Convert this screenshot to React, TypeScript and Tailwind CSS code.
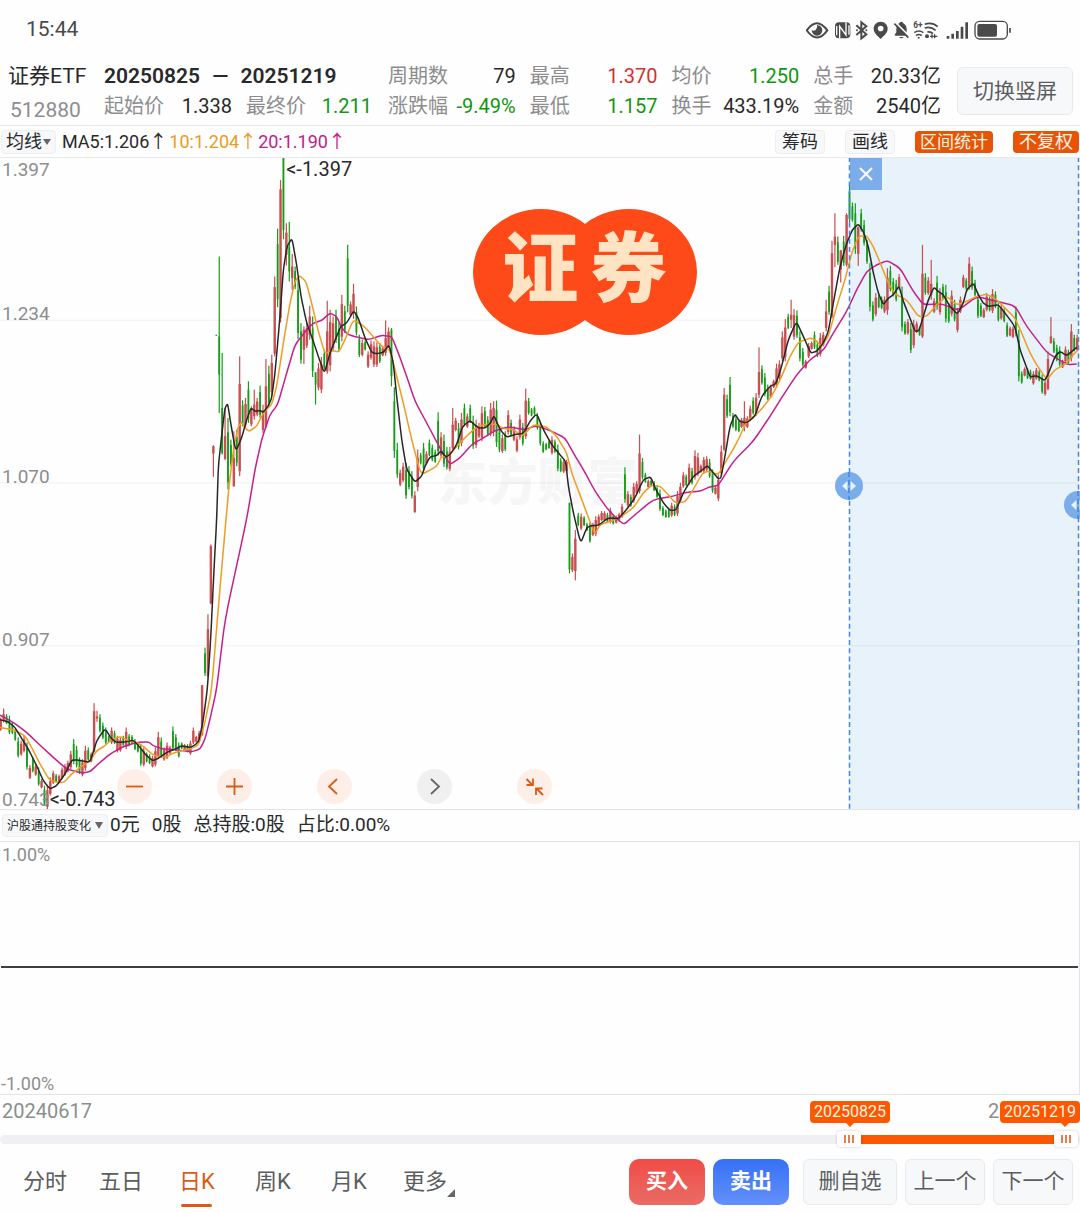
import React, { useState } from "react";

const RED = "#c94f50";
const GREEN = "#179c1a";
const STEP = 2.919;

// Each bar: colour letter, high, low and, where it differs, body top and body bottom.
// Values are thirds of a chart unit below the section's base.
const SECTIONS: { x: number; base: number; bars: string }[] = [
  {
    x: 0.7,
    base: 690,
    bars:
      "r85,125 r58,100,75,95 g75,105 g80,135 g100,135 g120,155 g145,205 r155,200 r140,190 g160,242 r228,270 g205,250 r225,260 g235,290 r270,298 g290,350 r290,360 r265,320 r245,285 g255,280 " +
      "r257,280 r235,270 r225,260 r215,250 r185,240 g150,225 g170,235 g205,255 r210,262 r170,245 g175,215 r190,220 r42,190,66,188 r65,98,82,88 g75,130 g100,150 g115,165 g140,160 r115,165 g125,165 " +
      "r140,190 r145,188 g140,170 r115,180 g135,172 g138,165 g150,183 g160,190 g165,230 r175,232 g190,220 g195,225 r200,235 r175,232 r128,210 g145,205 r175,215 r160,210 r170,195 g112,185 " +
      "g135,185 g160,205 g160,180 r165,185 g165,190 r155,197 r115,165 r140,160 r125,160 r-12,140,-12,138 g-125,-40 r-225,-35,-180,-40 r-435,-255,-430,-258",
  },
  {
    x: 213.4,
    base: 150,
    bars:
      "r887,982,890,912 g555,558 g320,790,560,675 g610,915,775,910 r775,932,860,928 g805,1020 g870,950 r845,1012,925,1010 g840,950 r620,980,703,965 g752,830 r745,835 g695,820 r770,830 r720,810,765,800 r745,800 g708,805 r765,850 r628,835,710,830 g648,770 " +
      "r615,740 r380,620,412,612 g236,472 r90,518,118,505 g22,268,22,240 r220,347,248,315 g216,395,290,365 r312,420,350,385 g350,418 g385,568 g520,642 r530,643,540,600 r520,595 r468,570,500,555 g500,682 g668,765,668,705 r640,722 r622,730 g600,660 r453,672,545,665 " +
      "r480,665 r500,605 g480,580 g520,605 r435,575 g468,550 g285,488 r455,500 r402,507,432,490 g470,557 g555,622 r570,620 g572,602 r605,655 r572,630 r575,652 r578,652 g580,640 r590,620 r512,618,565,610 r533,595 g535,710,540,680 g713,925 g880,985 r960,1010 " +
      "r940,998 g940,1048 g950,1020 g965,1047 r1025,1090,1038,1088 r900,1025 g910,945 g880,965 r905,945 g870,920",
  },
  {
    x: 432.3,
    base: 370,
    bars:
      "g225,275 g240,280 g128,258 r188,265 g195,292 g232,300 r232,305 r115,240,165,235 r145,185 g160,240 r130,230 g102,170 r132,175 g105,160 g138,238 r150,235 r160,205 r110,215 g112,175 g140,200 " +
      "r100,200 r95,200,115,185 g93,232 g170,248 r195,250 g185,245 r122,195 g150,200 r170,215 r200,248 r135,210 g160,228 r57,208,93,200 g85,135 g115,140 g110,135 g130,180 g160,228 g215,250 g220,242 " +
      "g210,238 r200,255 g210,250 g225,305 g265,308 r270,310 r270,308 g400,612,400,600 r552,608 r482,633,508,605 g430,470 r432,482 g440,470 g460,485 g460,520 r460,500 r440,500 r435,470 r425,455 r425,455 " +
      "g430,460 r415,462 g435,465 r438,462 r430,455 r403,445 g293,400 r365,412 g375,412 r340,400 r335,375 r195,372,252,365 g265,330 g310,340 r330,355 g330,350 g335,365 g350,385 g360,425 g410,440 " +
      "g420,445 g415,445 r400,442 g405,440 r365,440 r340,400 r308,355 g315,350 r282,345 g295,345 r242,330 r250,320 r285,310 r262,310 r260,305 g268,325 g300,370 r350,375 r315,395 r228,320 " +
      "r55,245,75,240 g75,145 g22,140 g130,175 g140,185 g150,188",
  },
  {
    x: 741.5,
    base: 180,
    bars:
      "r715,745 r665,755,715,740 r710,745 r678,725 g653,705 r640,710 r503,655,577,645 g557,615 g580,650 g615,662 r615,655 r600,625 r552,625 r542,600 r455,545 r418,545 g402,448 r360,445,405,420 r388,480 g392,475 " +
      "g455,545 g505,560 r540,567 r490,535 r485,510 g455,508 g485,532 r460,530 r457,500 r360,455,395,445 g318,405 r183,415,220,410 r100,262,170,195 g170,255 r210,308,212,270 g168,258 r100,260,105,255 g12,128 g68,125 g70,222 " +
      "r140,258,142,222 g87,155 g120,197 g180,252 g250,395 g365,425 r340,410 g345,385 g350,388 r350,400 r265,405 g258,335 g295,350 g300,365 r283,330 g320,455 g425,465 r418,465 g430,520 r420,505 " +
      "r425,460 g440,468 r195,475,282,470 g280,345 r292,345 r240,360,312,345 r355,400 g288,390 r325,405 g312,360 g315,428 g370,430 r332,410 g360,425 r385,458 r350,400 r285,325 g295,330 r232,330 g260,330 " +
      "g300,350 g345,415 g370,412 r385,415 r340,395 g350,395 r328,400 g335,385 g370,425 r375,420 g385,428 g428,472 r440,470 r440,475 g380,470 g450,605 g575,612 r563,590 g565,598 g570,600 " +
      "r575,615 r565,600 g570,605 g585,642 r600,648 r515,632,538,628 r412,492,470,490 g475,520 g495,545 g500,560 r540,565 r500,550 g510,552 r433,545 g465,515 r465,515",
  },
];

type Run = [number, number, string];

const AVERAGES: { color: string; runs: Run[] }[] = [
  {
    color: "#c41f8c",
    runs: [
      [0, 690, "0,78 40,100 80,130 120,168 160,205 200,240 245,252 270,248 300,220 330,195 370,172 410,160 445,158 460,170 490,180 530,183 575,188 600,180 615,150 630,90 650,0 675,-210"],
      [190, 150, "170,1110 195,960 215,870 240,795 263,765 290,670 315,585 350,540 370,520 395,512 420,490 440,500 455,535 475,555 500,562 535,570 575,557 605,560 625,610 650,680"],
      [400, 370, "45,95 80,160 125,245 150,285 180,265 215,225 250,205 285,183 325,172 375,180 410,168 455,185 495,205 520,250 550,300 585,365 620,415 650,448 672,465 700,440 760,390 820,380 860,368"],
      [700, 180, "0,935 30,922 55,918 100,845 160,785 210,710 240,662 290,585 330,540 370,512 400,460 440,395 470,330 500,275 530,255 562,242 600,265 640,335 670,375 725,372 775,392 830,350 880,362 945,378 980,440 1040,518 1080,542 1105,555 1130,553"],
    ],
  },
  {
    color: "#ef9c22",
    runs: [
      [0, 690, "0,115 40,122 75,140 95,175 120,225 150,275 190,282 215,255 240,235 270,215 290,185 315,170 330,155 360,142 385,155 410,160 430,172 450,190 465,200 495,205 520,192 545,185 575,178 595,168 615,100 635,0 657,-270"],
      [190, 150, "108,1110 118,1000 132,890 145,830 155,818 165,835 177,845 200,830 215,800 228,780 245,765 260,710 280,580 300,460 315,395 328,377 348,395 365,460 385,545 405,612 425,602 447,607 465,570 490,510 520,528 545,555 575,590 598,600 610,640 640,760 665,870 690,965 700,972"],
      [400, 370, "88,303 110,290 125,262 145,260 175,225 210,190 235,168 270,163 290,165 315,178 335,178 368,200 400,165 440,172 470,200 500,250 515,310 545,390 575,470 585,495 600,465 640,453 665,440 700,415 730,370 755,347 780,350 800,370 825,400 855,398 880,360 905,315 920,305 955,315 975,280 1000,238"],
      [700, 180, "115,780 140,725 175,700 215,650 245,590 270,530 295,488 330,475 345,480 365,500 385,470 410,380 435,300 455,220 475,170 500,167 520,200 545,260 565,310 585,343 620,360 655,410 680,410 710,375 740,350 770,375 800,365 830,350 860,343 890,360 915,385 945,415 965,460 990,520 1010,555 1040,600 1065,570 1095,555 1115,530 1130,515"],
    ],
  },
  {
    color: "#272727",
    runs: [
      [0, 690, "0,92 25,98 45,115 60,140 85,180 110,230 130,275 150,300 170,290 195,255 215,213 235,213 270,220 290,155 315,118 335,150 350,160 380,158 400,153 420,175 440,200 458,215 475,208 500,190 530,178 545,170 570,175 585,168 597,155 610,90 622,0 632,-150 642,-360"],
      [190, 150, "80,1110 85,950 97,840 105,775 113,762 122,820 137,905 155,865 170,810 183,775 195,785 210,783 220,788 235,768 245,745 255,670 270,500 280,360 291,290 306,265 320,345 333,440 350,520 370,575 385,620 403,672 420,610 440,560 452,530 470,520 491,483 505,505 525,565 545,608 560,612 580,608 597,585 610,640 620,740 635,870 650,960 675,998 695,980"],
      [400, 370, "75,290 90,262 110,258 122,245 138,262 150,255 170,225 188,170 210,153 235,175 255,175 270,162 282,138 300,180 320,203 345,195 370,192 390,155 410,132 430,180 455,225 475,250 497,275 505,350 520,430 542,522 560,475 575,468 595,468 625,445 655,448 680,420 705,385 730,330 752,322 765,355 790,400 810,423 828,422 850,370 880,320 905,303 922,288 940,310 955,328 963,325 975,260 990,170 1005,133"],
      [700, 180, "118,725 140,730 165,710 185,650 210,620 228,612 245,560 265,480 289,425 310,470 332,520 350,515 370,490 385,455 400,370 420,260 440,190 457,150 475,132 490,155 505,200 520,280 535,340 550,375 565,355 580,345 597,318 610,365 630,415 645,455 657,453 670,410 685,360 702,322 715,335 730,345 750,380 772,403 790,370 800,330 820,310 835,345 850,370 865,380 895,375 915,400 945,440 960,510 975,550 990,592 1010,588 1035,603 1050,570 1065,530 1080,515 1100,528 1130,503"],
    ],
  },
];

function averagePath(runs: Run[]) {
  const pts = runs.flatMap(([ox, oy, text]) =>
    text.split(" ").map((p) => {
      const [x, y] = p.split(",").map(Number);
      return [ox + x / 3, oy + y / 3];
    })
  );
  let d = `M${pts[0][0]} ${pts[0][1]}`;
  for (let i = 1; i < pts.length - 1; i++) {
    const [x, y] = pts[i];
    const [px, py] = pts[i - 1];
    const [nx, ny] = pts[i + 1];
    d += `L${x + (px - x) * 0.25} ${y + (py - y) * 0.25}Q${x} ${y} ${x + (nx - x) * 0.25} ${y + (ny - y) * 0.25}`;
  }
  const last = pts[pts.length - 1];
  return d + `L${last[0]} ${last[1]}`;
}

function Candles() {
  return (
    <g>
      {SECTIONS.map((s) =>
        s.bars.split(" ").map((bar, i) => {
          const v = bar.slice(1).split(",").map(Number);
          const inset = (v[1] - v[0]) * 0.2;
          const [hi, lo, top = v[0] + inset, bottom = v[1] - inset / 2] = v;
          const x = s.x + i * STEP;
          const y = (n: number) => s.base + n / 3;
          const red = bar[0] === "r";
          const fill = red ? RED : GREEN;
          return (
            <g key={`${s.x}-${i}`} fill={fill}>
              <rect x={x - 0.6} y={y(hi)} width={1.2} height={(lo - hi) / 3} />
              <rect x={x - (red ? 1.2 : 0.9)} y={y(top)} width={red ? 2.4 : 1.8} height={(bottom - top) / 3} />
            </g>
          );
        })
      )}
    </g>
  );
}

function StatusIcons() {
  return (
    <svg viewBox="78 55 621 66" className="h-[22px] w-[207px]" fill="none" stroke="#4a4a4a" aria-label="状态图标">
      <path d="M80 89Q111 46 142 89Q111 132 80 89Z" strokeWidth="6" />
      <path d="M111 73a16 16 0 1 1-16 16q10 4 14-4t2-12Z" fill="#4a4a4a" stroke="none" />
      <rect x="165" y="65" width="46" height="48" rx="12" fill="#4a4a4a" stroke="none" />
      <path d="M179 113V77l19 26V65M170 104V76M207 102V74" stroke="#fff" strokeWidth="4" />
      <path d="M229 74l30 27-15 12V65l15 12-30 26" strokeWidth="6" />
      <circle cx="231" cy="89" r="3" fill="#4a4a4a" stroke="none" />
      <circle cx="259" cy="89" r="3" fill="#4a4a4a" stroke="none" />
      <path d="M302 63c-12 0-21 9-21 21 0 14 14 23 21 31 7-8 21-17 21-31 0-12-9-21-21-21Zm0 12a8 8 0 1 1 0 17 8 8 0 0 1 0-17Z" fill="#4a4a4a" fillRule="evenodd" stroke="none" />
      <path d="M354 70q5-2 6-5 4-4 8 0 1 3 5 5 7 5 7 14v12l5 9h-37l-5-1 6-9V84q0-9 5-14ZM357 109h14q-7 8-14 0Z" fill="#4a4a4a" stroke="none" />
      <path d="M347 66l42 42" stroke="#fff" strokeWidth="5" />
      <path d="M343 69l42 42" strokeWidth="5" />
      <text x="400" y="82" fontSize="25" fontWeight="700" fill="#4a4a4a" stroke="none" fontFamily="Roboto">6+</text>
      <path d="M434 71q22-8 39 7M434 82q18-6 33 7M442 94q10-2 17 5M403 96q13-10 27 0M408 105q9-7 17 0" strokeWidth="5" />
      <circle cx="416" cy="111" r="3" fill="#4a4a4a" stroke="none" />
      <circle cx="441" cy="107" r="6" fill="#4a4a4a" stroke="none" />
      <path d="M456 101v12M464 101v12M450 107h22" strokeWidth="4" />
      <path d="M504 106v8M518 99v15M532 91v23M546 78v36M560 65v49" strokeWidth="8" />
      <rect x="585" y="62" width="97" height="53" rx="14" strokeWidth="4" />
      <rect x="592" y="70" width="59" height="38" rx="6" fill="#4a4a4a" stroke="none" />
      <path d="M690 82v14" strokeWidth="5" />
    </svg>
  );
}

type Stat = { label: string; value: string; tone: string };

function StatRow({ label, value, tone }: Stat) {
  return (
    <div className="flex justify-between">
      <span className="text-[#8d8d8f]">{label}</span>
      <span className={tone}>{value}</span>
    </div>
  );
}

const DARK = "text-[#29292b]";
const UP = "text-[#d3302f]";
const DOWN = "text-[#0f980f]";

const STATS: Stat[][] = [
  [
    { label: "周期数", value: "79", tone: DARK },
    { label: "涨跌幅", value: "-9.49%", tone: DOWN },
  ],
  [
    { label: "最高", value: "1.370", tone: UP },
    { label: "最低", value: "1.157", tone: DOWN },
  ],
  [
    { label: "均价", value: "1.250", tone: DOWN },
    { label: "换手", value: "433.19%", tone: DARK },
  ],
  [
    { label: "总手", value: "20.33亿", tone: DARK },
    { label: "金额", value: "2540亿", tone: DARK },
  ],
];

function Header() {
  return (
    <header className="flex border-b border-[#e9e9ec] pt-px pr-[7px] pl-2 text-xl leading-[30px]">
      <div className="w-24 shrink-0">
        <h1 className={`text-[21px] whitespace-nowrap ${DARK}`}>证券ETF</h1>
        <p className="pt-1 pl-[2px] text-[21px] text-[#8d8d8f]">512880</p>
      </div>
      <div className="mr-4 w-[268px] shrink-0">
        <p className={`text-[21px] font-semibold whitespace-nowrap ${DARK}`}>
          20250825 <span className="px-[7px]">—</span> 20251219
        </p>
        <div className="flex gap-[14px]">
          <div className="w-32">
            <StatRow label="起始价" value="1.338" tone={DARK} />
          </div>
          <div className="w-[126px]">
            <StatRow label="最终价" value="1.211" tone={DOWN} />
          </div>
        </div>
      </div>
      <div className="grid min-w-0 flex-1 grid-cols-4 gap-x-[14px] whitespace-nowrap">
        {STATS.map((col) => (
          <div key={col[0].label}>
            {col.map((s) => (
              <StatRow key={s.label} {...s} />
            ))}
          </div>
        ))}
      </div>
      <button className="mt-[6px] ml-4 h-12 w-[116px] shrink-0 rounded-md border border-[#e8ebee] bg-[#f7f8fa] text-[21px] text-[#5c5d60]">
        切换竖屏
      </button>
    </header>
  );
}

function AverageBar() {
  return (
    <div className="flex h-8 items-center border-b border-[#e9e9ec] pr-px pl-px text-lg leading-6">
      <button className={`mr-[6px] flex items-center gap-px rounded border border-[#eceef0] bg-[#f7f8fa] px-1 leading-[22px] ${DARK}`}>
        均线
        <svg viewBox="0 0 8 6" className="h-[6px] w-2" fill="#666">
          <path d="M0 0h8L4 6Z" />
        </svg>
      </button>
      <span className={DARK}>MA5:1.206↑</span>
      <span className="ml-[2px] text-[#ec9a20]">10:1.204↑</span>
      <span className="ml-px text-[#c0208a]">20:1.190↑</span>
      <div className="ml-auto flex items-center gap-5 leading-[22px]">
        <button className={`rounded border border-[#eceef0] bg-[#f7f8fa] px-[6px] ${DARK}`}>筹码</button>
        <button className={`rounded border border-[#eceef0] bg-[#f7f8fa] px-[6px] ${DARK}`}>画线</button>
        <button className="rounded bg-[#e65507] px-[5px] text-[17px] text-[#fff3e6]">区间统计</button>
        <button className="rounded bg-[#e65507] px-[6px] text-[#fff3e6]">不复权</button>
      </div>
    </div>
  );
}

const PRICES = [
  { text: "1.397", place: "top-[3px]" },
  { text: "1.234", place: "top-[147px]" },
  { text: "1.070", place: "top-[310px]" },
  { text: "0.907", place: "top-[473px]" },
  { text: "0.743", place: "top-[633px]" },
];

const TOOLS = [
  { name: "缩小", d: "M9 17.5h17", tone: "bg-[#fdeee7] text-[#dc5b14]" },
  { name: "放大", d: "M9 17.5h17M17.5 9v17", tone: "bg-[#fdeee7] text-[#dc5b14]" },
  { name: "向左", d: "M20 10l-8 7.500 8 7.500", tone: "bg-[#fdeee7] text-[#dc5b14]" },
  { name: "向右", d: "M14 10l8 7.500-8 7.500", tone: "bg-[#f0f0f1] text-[#666]" },
  { name: "收起", d: "M9.500 10l6 6M16 9.500v6.500H9.500M26 26l-6-6M19 26v-6.500h6.500", tone: "bg-[#fdeee7] text-[#dc5b14]" },
];

function HandleButton({ label, place }: { label: string; place: string }) {
  return (
    <button aria-label={label} className={`absolute h-7 w-7 -translate-x-1/2 rounded-full bg-[#7badeb] ${place}`}>
      <svg viewBox="0 0 28 28" className="h-7 w-7" fill="#e9f3fd">
        <path d="M12.500 9v10L7 14ZM15.500 9v10l5.500-5Z" />
        <path d="M14 0v28" stroke="#4786d6" strokeWidth="1.500" strokeDasharray="5 3" />
      </svg>
    </button>
  );
}

function MainChart() {
  return (
    <section className="relative h-[652px] overflow-hidden border-b border-[#e4e4e6]">
      <p className="absolute top-[293px] left-[40.5%] text-[50px] leading-[64px] font-black text-[#f6f6f6]">东方财富</p>
      <svg viewBox="0 158 1080 652" preserveAspectRatio="none" className="absolute inset-0 h-full w-full">
        <rect x="849.500" y="157" width="229" height="653" fill="#e7f2fb" />
        <path d="M0 320.500H1080M0 483.500H1080M0 646.500H1080" stroke="#000" strokeOpacity="0.060" />
        <Candles />
        {AVERAGES.map((a) => (
          <path key={a.color} d={averagePath(a.runs)} fill="none" stroke={a.color} strokeWidth="1.500" strokeLinejoin="round" />
        ))}
        <path d="M849.500 157V810M1078.500 157V810" stroke="#4786d6" strokeWidth="1.500" strokeDasharray="5 3.200" />
      </svg>

      {PRICES.map((p) => (
        <span key={p.text} className={`absolute left-[2px] text-[19px] leading-[18px] text-[#8d8d8f] ${p.place}`}>
          {p.text}
        </span>
      ))}
      <span className={`absolute top-[1px] left-[26.5%] text-xl leading-5 ${DARK}`}>&lt;-1.397</span>
      <span className={`absolute top-[631px] left-[4.600%] text-xl leading-5 ${DARK}`}>&lt;-0.743</span>

      <div className="absolute top-[51px] left-[43.750%] h-[126px] w-[224px]">
        <svg viewBox="0 0 224 126" className="absolute inset-0 h-full w-full" fill="#fe4a18">
          <ellipse cx="68" cy="63" rx="68" ry="63" />
          <ellipse cx="156" cy="63" rx="68" ry="63" />
        </svg>
        <p className="relative flex justify-center gap-3 text-[76px] leading-[122px] font-black text-[#ffe4c4]">
          <span>证</span>
          <span>券</span>
        </p>
      </div>

      <button aria-label="关闭区间统计" className="absolute top-0 left-[78.700%] h-8 w-8 bg-[#7badeb]">
        <svg viewBox="0 0 32 32" className="h-8 w-8" stroke="#fff" strokeWidth="2">
          <path d="M10 10l12 12M22 10L10 22" />
        </svg>
      </button>
      <HandleButton label="区间起点" place="top-[314px] left-[78.600%]" />
      <HandleButton label="区间终点" place="top-[333px] left-[99.800%]" />

      <div className="absolute bottom-[5px] left-[117px] flex gap-[65px]">
        {TOOLS.map((t) => (
          <button key={t.name} aria-label={t.name} className={`h-[35px] w-[35px] rounded-full ${t.tone}`}>
            <svg viewBox="0 0 35 35" className="h-[35px] w-[35px]" fill="none" stroke="currentColor" strokeWidth="1.800">
              <path d={t.d} />
            </svg>
          </button>
        ))}
      </div>
    </section>
  );
}

function HoldingsPanel() {
  return (
    <section>
      <div className={`flex h-8 items-center border-b border-[#e4e4e6] pl-[2px] text-[19px] ${DARK}`}>
        <button className="mr-[2px] flex h-[23px] items-center gap-1 rounded border border-[#eceef0] bg-[#f7f8fa] px-1 text-xs">
          沪股通持股变化
          <svg viewBox="0 0 8 7" className="h-[7px] w-2" fill="#666">
            <path d="M0 0h8L4 7Z" />
          </svg>
        </button>
        <p className="flex gap-3">
          <span>0元</span>
          <span>0股</span>
          <span>总持股:0股</span>
          <span>占比:0.00%</span>
        </p>
      </div>
      <div className="grid h-[253px] grid-rows-2 border-r border-b border-[#e4e4e6] text-lg leading-5 text-[#8d8d8f]">
        <p className="mx-px border-b-2 border-[#3f3f41] pt-[3px] pl-px">1.00%</p>
        <p className="self-end pl-px">-1.00%</p>
      </div>
    </section>
  );
}

function Flag({ text, place, pointer }: { text: string; place: string; pointer: string }) {
  return (
    <span className={`absolute top-[6px] rounded bg-[#fd5700] px-1 text-base leading-[22px] text-[#fff3e6] ${place}`}>
      {text}
      <svg viewBox="0 0 10 5" className={`absolute top-[21px] h-[5px] w-[10px] ${pointer}`} fill="#fd5700">
        <path d="M0 0h10L5 5Z" />
      </svg>
    </span>
  );
}

function Grip({ place }: { place: string }) {
  return (
    <span className={`absolute top-0 flex h-4 w-6 -translate-x-1/2 items-center justify-center gap-[2px] rounded bg-white shadow-[0_0_3px_rgba(0,0,0,0.2)] ${place}`}>
      <i className="h-2 w-[2px] bg-[#e08050]" />
      <i className="h-2 w-[2px] bg-[#e08050]" />
      <i className="h-2 w-[2px] bg-[#e08050]" />
    </span>
  );
}

function RangeBar() {
  const [from, setFrom] = useState(290);
  const [to, setTo] = useState(368);
  return (
    <section className="relative h-[54px] text-xl leading-8">
      <div className="flex justify-between px-[2px] text-[#8d8d8f]">
        <span>20240617</span>
        <span>20251219</span>
      </div>
      <Flag text="20250825" place="left-[78.700%] -translate-x-1/2" pointer="left-[35px]" />
      <Flag text="20251219" place="right-0" pointer="right-[10px]" />
      <div className="relative mt-1 h-4">
        <div className="absolute inset-x-0 top-1 h-[9px] rounded-full bg-[#f0f0f2]" />
        <div className="absolute top-1 right-[2.200%] left-[79.200%] h-[9px] bg-[#fd5700]" />
        <Grip place="left-[78.600%]" />
        <Grip place="left-[98.700%]" />
        <input aria-label="起始日期" type="range" min={0} max={369} value={from} onChange={(e) => setFrom(Number(e.target.value))} className="absolute inset-y-0 left-0 w-[88%] opacity-0" />
        <input aria-label="结束日期" type="range" min={0} max={369} value={to} onChange={(e) => setTo(Number(e.target.value))} className="absolute inset-y-0 right-0 w-[12%] opacity-0" />
      </div>
    </section>
  );
}

const TABS = ["分时", "五日", "日K", "周K", "月K", "更多"];

function Footer() {
  const [tab, setTab] = useState("日K");
  const plain = "h-[46px] rounded-md border border-[#e8ebee] bg-[#f7f8fa] text-[21px] text-[#5c5d60]";
  return (
    <footer className="flex items-center justify-between pt-[10px] pr-[7px] pb-[7px] pl-[7px]">
      <nav className="flex text-[22px] leading-[46px]">
        {TABS.map((t) => (
          <button key={t} onClick={() => setTab(t)} className={`relative w-[76px] ${tab === t ? "text-[#dc5b14]" : "text-[#5c5d60]"}`}>
            {t}
            {tab === t && <span className="absolute -bottom-[2px] left-[22px] h-[3px] w-[31px] rounded-full bg-[#dc5b14]" />}
            {t === "更多" && (
              <svg viewBox="0 0 8 8" className="absolute right-2 bottom-[8px] h-2 w-2" fill="#666">
                <path d="M8 0v8H0Z" />
              </svg>
            )}
          </button>
        ))}
      </nav>
      <div className="flex gap-2">
        <button className="h-[46px] w-[76px] rounded-[10px] bg-linear-to-b from-[#ef4b45] to-[#ea6b66] text-[21px] font-bold text-white">买入</button>
        <button className="mr-[6px] h-[46px] w-[76px] rounded-[10px] bg-linear-to-b from-[#3670f6] to-[#6390fb] text-[21px] font-bold text-white">卖出</button>
        <button className={`w-[94px] ${plain}`}>删自选</button>
        <button className={`w-20 ${plain}`}>上一个</button>
        <button className={`w-20 ${plain}`}>下一个</button>
      </div>
    </footer>
  );
}

export default function App() {
  return (
    <main className="overflow-hidden bg-[#fefefe] font-['Roboto','Noto_Sans_CJK_SC',sans-serif]">
      <div className="flex h-[60px] items-center justify-between pr-[67px] pl-[26px]">
        <time className="text-[21px] text-[#4a4a4a]">15:44</time>
        <StatusIcons />
      </div>
      <Header />
      <AverageBar />
      <MainChart />
      <HoldingsPanel />
      <RangeBar />
      <Footer />
    </main>
  );
}
